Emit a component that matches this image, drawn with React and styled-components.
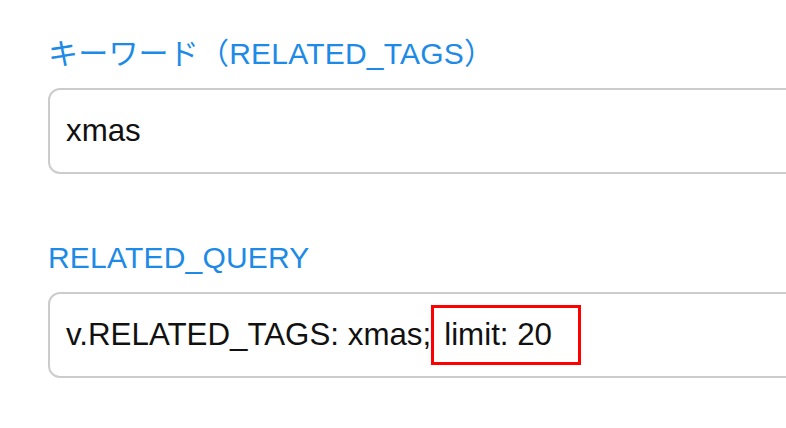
import styled, { createGlobalStyle } from "styled-components";

const GlobalStyle = createGlobalStyle`
  html, body {
    margin: 0;
    padding: 0;
    background: #ffffff;
    overflow: hidden;
  }
  body {
    font-family: "Liberation Sans", "Noto Sans CJK JP", sans-serif;
  }
`;

const Page = styled.div`
  padding: 34px 0 0 48px;
  width: 860px;
  display: flex;
  flex-direction: column;
  row-gap: 64px;
`;

const Field = styled.div`
  display: flex;
  flex-direction: column;
  row-gap: 14px;
`;

const Label = styled.label`
  font-size: 30px;
  line-height: 40px;
  color: #1c8ae6;
  letter-spacing: 0.2px;
`;

const Box = styled.div`
  height: 82px;
  border: 2px solid #cccccc;
  border-radius: 12px;
  display: flex;
  align-items: center;
  padding: 0 16px;
  font-size: 31.3px;
  color: #111111;
  white-space: nowrap;
`;

const Mark = styled.span`
  display: inline-block;
  border: 3px solid #ff0000;
  padding: 9px 26px 9px 10px;
`;

const App = () => {
  return (
    <>
      <GlobalStyle />
      <Page>
        <Field>
          <Label>キーワード（RELATED_TAGS）</Label>
          <Box>xmas</Box>
        </Field>
        <Field>
          <Label>RELATED_QUERY</Label>
          <Box>
            v.RELATED_TAGS: xmas;<Mark>limit: 20</Mark>
          </Box>
        </Field>
      </Page>
    </>
  );
};

export default App;
